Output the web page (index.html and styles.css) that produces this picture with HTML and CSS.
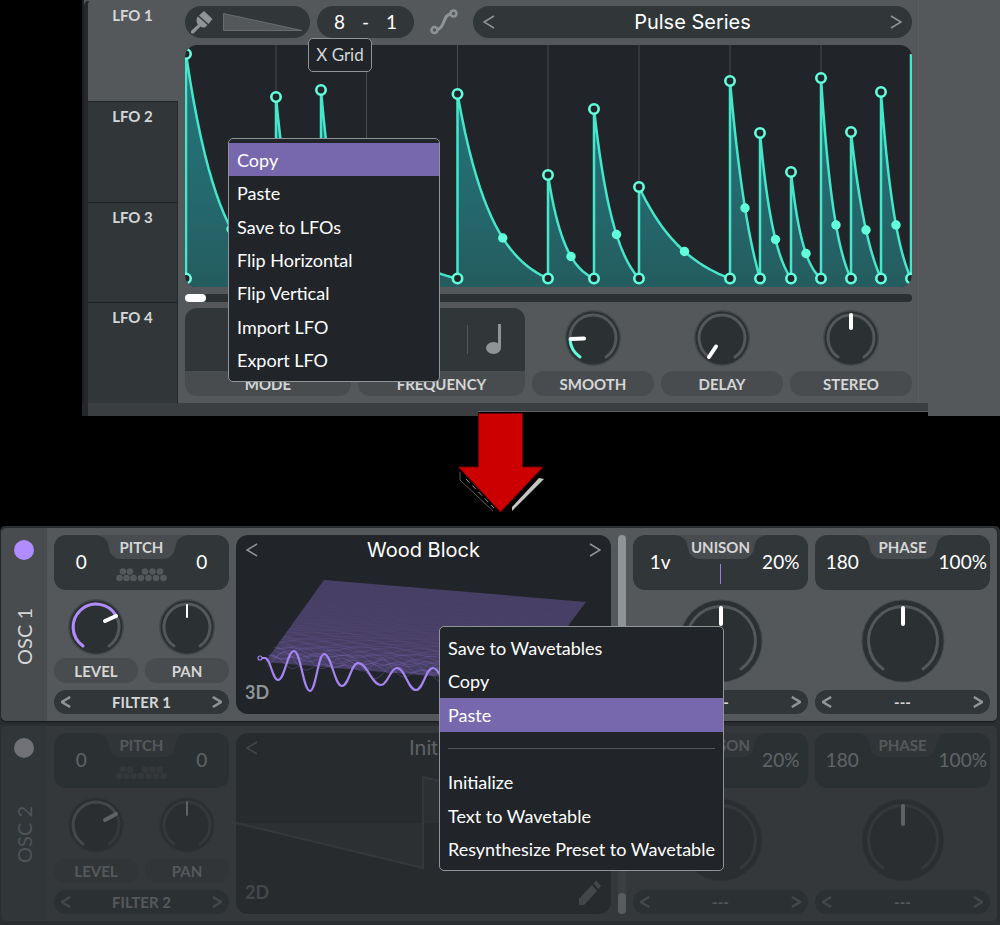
FILE: index.html
```html
<!DOCTYPE html>
<html lang="en">
<head>
<meta charset="utf-8">
<title>LFO to wavetable</title>
<link rel="stylesheet" href="styles.css">
</head>
<body>
<svg class="defs" aria-hidden="true">
  <defs>
    <symbol id="prev" viewBox="0 0 12 14"><path d="M11 1 1 7l10 6"/></symbol>
    <symbol id="next" viewBox="0 0 12 14"><path d="m1 1 10 6-10 6"/></symbol>
    <symbol id="dial" viewBox="-28 -28 56 56">
      <circle class="dial-rim" r="28"/><circle class="dial-face" r="26.500"/>
      <path class="dial-track" d="M-13 19A23 23 0 1 1 13 19"/>
    </symbol>
    <symbol id="dial-big" viewBox="-42 -42 84 84">
      <circle class="dial-rim" r="41.500"/><circle class="dial-face" r="40.500"/>
      <path class="dial-track" d="M-20 28A34.500 34.500 0 1 1 20 28"/>
    </symbol>
    <symbol id="keys" viewBox="0 0 52 14">
      <g fill="currentColor"><circle cx="7" cy="3.500" r="3.300"/><circle cx="14" cy="3.500" r="3.300"/><circle cx="29" cy="3.500" r="3.300"/><circle cx="36.500" cy="3.500" r="3.300"/><circle cx="44" cy="3.500" r="3.300"/>
      <circle cx="3.500" cy="10" r="3.300"/><circle cx="10.500" cy="10" r="3.300"/><circle cx="17.500" cy="10" r="3.300"/><circle cx="25" cy="10" r="3.300"/><circle cx="32.500" cy="10" r="3.300"/><circle cx="40" cy="10" r="3.300"/><circle cx="47.500" cy="10" r="3.300"/></g>
    </symbol>
  </defs>
</svg>

<section class="lfo">
  <nav class="tabs">
    <button class="tab tab--on">LFO 1</button>
    <button class="tab">LFO 2</button>
    <button class="tab">LFO 3</button>
    <button class="tab">LFO 4</button>
  </nav>
  <div class="lfo-main">
    <div class="toolbar">
      <button class="pill brush" aria-label="Paint pattern">
        <svg width="24" height="24" viewBox="0 0 24 24" fill="#8f9497"><path d="m14 1 8.500 8-4 5-9.500-8.500z"/><path d="m8 6.500 9.500 8.500-2 2c-1.500 1-3.500.5-5-.5L4 23c-2 1.500-4-.5-2.500-2.500L8 14.500c-1.500-2-2.500-5.500 0-8z"/></svg>
        <svg width="80" height="18" viewBox="0 0 80 18" fill="#54585b" stroke="#676b6e"><path d="M.5.5v17h78.500z"/></svg>
      </button>
      <div class="pill grid-size"><button>8</button><span>-</span><button>1</button></div>
      <button class="smooth-toggle" aria-label="Smooth mode"><svg width="28" height="26" viewBox="0 0 28 26" fill="none" stroke="#8f9497" stroke-width="2.500"><circle cx="4.500" cy="21" r="3"/><circle cx="23.500" cy="4.500" r="3"/><path stroke-width="3" d="M7.500 20.500C15 19 13 5.500 20.500 5"/></svg></button>
      <div class="pill selector">
        <button aria-label="Previous shape"><svg class="chev" width="12" height="14"><use href="#prev"/></svg></button>
        <span class="title">Pulse Series</span>
        <button aria-label="Next shape"><svg class="chev" width="12" height="14"><use href="#next"/></svg></button>
      </div>
    </div>
    <svg class="graph" viewBox="185 45 727 242" preserveAspectRatio="none" role="img" aria-label="LFO shape">
      <defs><linearGradient id="fade" gradientUnits="userSpaceOnUse" x1="0" y1="80" x2="0" y2="287"><stop offset="0" stop-color="#23747a"/><stop offset=".6" stop-color="#24686c"/><stop offset="1" stop-color="#245c5f"/></linearGradient></defs>
      <g id="graph"></g>
    </svg>
    <input class="phase-range" type="range" min="0" max="100" value="0" aria-label="Phase">
    <div class="controls">
      <div class="field field--left"><div class="field-value"></div><div class="caption">MODE</div></div>
      <div class="field field--right"><div class="field-value"><span class="divider"></span><svg width="16" height="31" viewBox="0 0 16 31" fill="#8f9497"><ellipse cx="7.500" cy="24" rx="7.500" ry="6"/><path d="M12 0h3v24h-3z"/></svg></div><div class="caption">FREQUENCY</div></div>
      <label class="knob"><svg class="dial" width="56" height="56" viewBox="-28 -28 56 56"><use href="#dial" x="-28" y="-28" width="56" height="56"/><path class="level level--teal" d="M-13 19A23 23 0 0 1-23 1"/><path class="hand" d="M-22 1-9 .5"/></svg><input type="range"><span class="caption">SMOOTH</span></label>
      <label class="knob"><svg class="dial" width="56" height="56" viewBox="-28 -28 56 56"><use href="#dial" x="-28" y="-28" width="56" height="56"/><path class="hand" d="M-13 19-6 8.500"/></svg><input type="range"><span class="caption">DELAY</span></label>
      <label class="knob"><svg class="dial" width="56" height="56" viewBox="-28 -28 56 56"><use href="#dial" x="-28" y="-28" width="56" height="56"/><path class="hand" d="M0-23V-10"/></svg><input type="range"><span class="caption">STEREO</span></label>
    </div>
  </div>
  <div class="lfo-foot"><div class="foot-left"></div><div class="foot-right"></div><div class="foot-end"></div></div>
  <div class="tooltip" role="tooltip">X Grid</div>
  <div class="menu menu--lfo" role="menu">
    <button class="on" role="menuitem">Copy</button>
    <button role="menuitem">Paste</button>
    <button role="menuitem">Save to LFOs</button>
    <button role="menuitem">Flip Horizontal</button>
    <button role="menuitem">Flip Vertical</button>
    <button role="menuitem">Import LFO</button>
    <button role="menuitem">Export LFO</button>
  </div>
</section>

<div class="arrow">
  <svg width="92" height="102" viewBox="454 412 92 102"><path d="M460 472v8l33 31" fill="none" stroke="#55595a"/><path d="m466 479 28 29" fill="none" stroke="#999" stroke-dasharray="5 4"/><path d="M512 507v4l32-32-5-1z" fill="#c3c5c3"/><path d="M478.500 413.500h44V467h20.500l-42.500 45-42-45h20z" fill="#c00" stroke="#700000"/></svg>
</div>

<main class="oscs">
  <section class="osc">
    <div class="side"><button class="power" aria-label="Oscillator 1 on"></button><h2>OSC 1</h2></div>
    <div class="body">
      <div class="col">
        <div class="box"><button>0</button><div class="notch"><span>PITCH</span><svg class="keys" width="52" height="14"><use href="#keys"/></svg></div><button>0</button></div>
        <div class="pair">
          <label class="knob"><svg class="dial" width="56" height="56" viewBox="-28 -28 56 56"><use href="#dial" x="-28" y="-28" width="56" height="56"/><path class="level" d="M-13 19A23 23 0 1 1 20-11.500"/><path class="hand" d="M20-11 9-6"/></svg><input type="range"><span class="caption">LEVEL</span></label>
          <label class="knob"><svg class="dial" width="56" height="56" viewBox="-28 -28 56 56"><use href="#dial" x="-28" y="-28" width="56" height="56"/><path class="hand hand--thin" d="M0-22V-10"/></svg><input type="range"><span class="caption">PAN</span></label>
        </div>
        <div class="pill route"><button aria-label="Previous output"><svg class="chev" width="10" height="12"><use href="#prev"/></svg></button><span>FILTER 1</span><button aria-label="Next output"><svg class="chev" width="10" height="12"><use href="#next"/></svg></button></div>
      </div>
      <div class="wave">
        <svg class="wave-art" viewBox="236 535 375 179" preserveAspectRatio="none" role="img" aria-label="Wavetable"><g id="mesh"></g></svg>
        <div class="wave-head"><button aria-label="Previous wavetable"><svg class="chev" width="12" height="14"><use href="#prev"/></svg></button><span class="title">Wood Block</span><button aria-label="Next wavetable"><svg class="chev" width="12" height="14"><use href="#next"/></svg></button></div>
        <div class="wave-foot"><button>3D</button></div>
      </div>
      <input class="frame-range" type="range" min="0" max="100" value="100" aria-label="Wave frame">
      <div class="col">
        <div class="box"><button>1v</button><div class="notch"><span>UNISON</span><i class="voice"></i></div><button>20%</button></div>
        <label class="knob knob--big"><svg class="dial" width="84" height="84" viewBox="-42 -42 84 84"><use href="#dial-big" x="-42" y="-42" width="84" height="84"/><path class="hand" d="M0-33V-17"/></svg><input type="range" aria-label="Unison warp"></label>
        <div class="pill route"><button aria-label="Previous warp"><svg class="chev" width="10" height="12"><use href="#prev"/></svg></button><span>---</span><button aria-label="Next warp"><svg class="chev" width="10" height="12"><use href="#next"/></svg></button></div>
      </div>
      <div class="col">
        <div class="box"><button>180</button><div class="notch"><span>PHASE</span></div><button>100%</button></div>
        <label class="knob knob--big"><svg class="dial" width="84" height="84" viewBox="-42 -42 84 84"><use href="#dial-big" x="-42" y="-42" width="84" height="84"/><path class="hand" d="M0-33V-17"/></svg><input type="range" aria-label="Phase warp"></label>
        <div class="pill route"><button aria-label="Previous morph"><svg class="chev" width="10" height="12"><use href="#prev"/></svg></button><span>---</span><button aria-label="Next morph"><svg class="chev" width="10" height="12"><use href="#next"/></svg></button></div>
      </div>
    </div>
  </section>

  <section class="osc osc--off">
    <div class="side"><button class="power" aria-label="Oscillator 2 off"></button><h2>OSC 2</h2></div>
    <div class="body">
      <div class="col">
        <div class="box"><button>0</button><div class="notch"><span>PITCH</span><svg class="keys" width="52" height="14"><use href="#keys"/></svg></div><button>0</button></div>
        <div class="pair">
          <label class="knob"><svg class="dial" width="56" height="56" viewBox="-28 -28 56 56"><use href="#dial" x="-28" y="-28" width="56" height="56"/><path class="level" d="M-13 19A23 23 0 1 1 20-11.500"/><path class="hand" d="M20-11 9-5"/></svg><input type="range"><span class="caption">LEVEL</span></label>
          <label class="knob"><svg class="dial" width="56" height="56" viewBox="-28 -28 56 56"><use href="#dial" x="-28" y="-28" width="56" height="56"/><path class="hand hand--thin" d="M0-23V-10"/></svg><input type="range"><span class="caption">PAN</span></label>
        </div>
        <div class="pill route"><button aria-label="Previous output"><svg class="chev" width="10" height="12"><use href="#prev"/></svg></button><span>FILTER 2</span><button aria-label="Next output"><svg class="chev" width="10" height="12"><use href="#next"/></svg></button></div>
      </div>
      <div class="wave">
        <svg class="wave-art" viewBox="236 733 375 181" preserveAspectRatio="none" role="img" aria-label="Saw wave"><path d="M236 823h375L423 777v91z" fill="#32373a"/><path d="m236 823 187 45v-91l188 46" fill="none" stroke="#54585b" stroke-width="2"/></svg>
        <div class="wave-head"><button aria-label="Previous wavetable"><svg class="chev" width="12" height="14"><use href="#prev"/></svg></button><span class="title">Init</span><button aria-label="Next wavetable"><svg class="chev" width="12" height="14"><use href="#next"/></svg></button></div>
        <div class="wave-foot"><button>2D</button><button aria-label="Edit wavetable"><svg width="24" height="26" viewBox="0 0 24 26" fill="#8f9497"><path d="M1 19 14 5l5 6L6 25H1z"/><path d="m15.500 3.500 2.500-3 5 5.500-2.500 3z"/></svg></button></div>
      </div>
      <input class="frame-range" type="range" min="0" max="100" value="100" aria-label="Wave frame">
      <div class="col">
        <div class="box"><button>1v</button><div class="notch"><span>UNISON</span></div><button>20%</button></div>
        <label class="knob knob--big"><svg class="dial" width="84" height="84" viewBox="-42 -42 84 84"><use href="#dial-big" x="-42" y="-42" width="84" height="84"/><path class="hand" d="M0-34V-16"/></svg><input type="range" aria-label="Unison warp"></label>
        <div class="pill route"><button aria-label="Previous warp"><svg class="chev" width="10" height="12"><use href="#prev"/></svg></button><span>---</span><button aria-label="Next warp"><svg class="chev" width="10" height="12"><use href="#next"/></svg></button></div>
      </div>
      <div class="col">
        <div class="box"><button>180</button><div class="notch"><span>PHASE</span></div><button>100%</button></div>
        <label class="knob knob--big"><svg class="dial" width="84" height="84" viewBox="-42 -42 84 84"><use href="#dial-big" x="-42" y="-42" width="84" height="84"/><path class="hand" d="M0-34V-16"/></svg><input type="range" aria-label="Phase warp"></label>
        <div class="pill route"><button aria-label="Previous morph"><svg class="chev" width="10" height="12"><use href="#prev"/></svg></button><span>---</span><button aria-label="Next morph"><svg class="chev" width="10" height="12"><use href="#next"/></svg></button></div>
      </div>
    </div>
  </section>

  <div class="menu menu--osc" role="menu">
    <button role="menuitem">Save to Wavetables</button>
    <button role="menuitem">Copy</button>
    <button class="on" role="menuitem">Paste</button>
    <hr>
    <button role="menuitem">Initialize</button>
    <button role="menuitem">Text to Wavetable</button>
    <button role="menuitem">Resynthesize Preset to Wavetable</button>
  </div>
</main>
<script src="app.js"></script>
</body>
</html>
```
FILE: styles.css
```css
* { box-sizing: border-box; }
body {
  margin: 0;
  background: #000;
  color: #d4d6d7;
  font: 15px/20px Lato, "Open Sans", sans-serif;
}
button {
  padding: 0;
  border: 0;
  background: none;
  color: inherit;
  font: inherit;
}
svg { display: block; flex: none; }
.defs { position: absolute; width: 0; height: 0; }

/* LFO section */
.lfo {
  position: relative;
  display: grid;
  grid-template-columns: 96px 1fr;
  margin-left: 82px;
  background: #54585b;
}
.tabs {
  display: grid;
  grid-auto-rows: 1fr;
  border-left: 2px solid #1c2023;
}
.tab {
  display: flex;
  justify-content: center;
  padding-top: 4px;
  border-left: 4px solid #24282b;
  border-right: 1px solid #24282b;
  border-top: 1px solid #202427;
  background: #313639;
  font-weight: 700;
}
.tab--on {
  border-top-left-radius: 6px;
  border-right-color: #54585b;
  border-top-color: #54585b;
  background: #54585b;
}
.lfo-main {
  display: flex;
  flex-direction: column;
  gap: 7px;
  margin-right: 81px;
  padding: 6px 6px 7px 7px;
  border-right: 1px solid #5b5f62;
}
.toolbar { display: flex; gap: 7px; height: 32px; }
.pill {
  display: flex;
  align-items: center;
  border-radius: 16px;
  background: #313639;
}
.brush { width: 125px; gap: 9px; padding-left: 5px; }
.grid-size {
  width: 97px;
  justify-content: space-between;
  padding: 0 17px;
  color: #fff;
  font-size: 19px;
}
.smooth-toggle { width: 45px; display: grid; place-items: center; }
.selector { flex: 1; justify-content: space-between; padding: 0 10px; }
.title {
  color: #fff;
  font: 20px/24px Inter, "Open Sans", sans-serif;
}
.chev { fill: none; stroke: #8f9497; stroke-width: 3; }
.selector .chev, .wave-head .chev { stroke-width: 1.500; }
.graph {
  width: 100%;
  height: 242px;
  border-radius: 12px;
  background: #212529;
}
.phase-range {
  width: 100%;
  height: 8px;
  margin: 0;
  border-radius: 4px;
  background: #2b3033;
  appearance: none;
}
.phase-range::-webkit-slider-thumb {
  width: 21px;
  height: 8px;
  border-radius: 4px;
  background: #fff;
  appearance: none;
}
.controls {
  display: grid;
  grid-template-columns: 166fr 167fr 122fr 122fr 122fr;
  gap: 7px;
  height: 88px;
  margin-top: -1px;
}
.field, .knob { display: flex; flex-direction: column; }
.field-value {
  flex: 1;
  display: flex;
  align-items: center;
  justify-content: flex-end;
  gap: 18px;
  padding-right: 23px;
  background: #313639;
}
.field--left .field-value { border-top-left-radius: 12px; }
.field--right .field-value { border-top-right-radius: 12px; }
.divider { width: 1px; height: 29px; background: #54585b; }
.caption {
  height: 25px;
  border-radius: 12px;
  background: #484c4f;
  text-align: center;
  line-height: 26px;
  font-weight: 700;
}
.field .caption { border-radius: 0 0 12px 12px; }
.knob { position: relative; justify-content: space-between; padding-top: 2px; }
.knob input { position: absolute; inset: 0; margin: 0; opacity: 0; }
.dial { align-self: center; }
.dial-rim { fill: #44484b; }
.dial-face { fill: #2b3033; }
.dial-track { fill: none; stroke: #54585b; stroke-width: 3; stroke-linecap: round; }
.level { fill: none; stroke: #b18cff; stroke-width: 3; stroke-linecap: round; }
.level--teal { stroke: #62ffdc; }
.hand { fill: none; stroke: #fff; stroke-width: 4; stroke-linecap: round; }
.hand--thin { stroke-width: 2; }
.lfo-foot {
  grid-column: 1 / -1;
  display: flex;
  align-items: flex-start;
  height: 13px;
  border-left: 6px solid #24282b;
  background: #000;
}
.foot-left { width: 390px; height: 13px; background: #3a3e41; }
.foot-right { flex: 1; height: 9px; border-bottom: 1px solid #5b5f62; background: #3a3e41; }
.foot-end { width: 72px; height: 13px; background: #54585b; }
.tooltip {
  position: absolute;
  top: 38px;
  left: 226px;
  width: 64px;
  padding: 6px 0;
  border: 1px solid #8f9497;
  border-radius: 5px;
  background: #212529;
  text-align: center;
  font-size: 17px;
}
.menu {
  position: absolute;
  display: grid;
  grid-auto-rows: 1fr;
  padding: 4px 0;
  border: 1px solid #8f9497;
  border-radius: 5px;
  background: #212529;
  color: #fff;
  font-size: 18px;
}
.menu button { padding: 0 8px; text-align: left; }
.menu .on { background: #7768ae; }
.menu hr {
  align-self: center;
  width: calc(100% - 16px);
  margin: 0 auto;
  border: 0;
  border-top: 1px solid #54585b;
}
.menu--lfo { top: 138px; left: 146px; width: 212px; height: 244px; }
.menu--osc { top: 100px; left: 439px; width: 285px; height: 245px; }

.arrow {
  position: relative;
  display: flex;
  justify-content: center;
  height: 114px;
  margin-top: -4px;
}

/* Oscillators */
.oscs {
  position: relative;
  display: grid;
  gap: 5px;
  padding: 2px 3px 4px 1px;
  border-radius: 5px 5px 0 0;
  background: #2a2e31;
}
.osc {
  display: grid;
  grid-template-columns: 46px 1fr;
  border-radius: 5px;
  box-shadow: 0 1px 2px #15181a;
}
.osc--off { box-shadow: none; }
.side {
  display: flex;
  flex-direction: column;
  align-items: center;
  border-radius: 5px 0 0 5px;
  background: #484c4f;
}
.power { width: 20px; height: 20px; margin-top: 12px; border-radius: 50%; background: #b18cff; }
.side h2 {
  margin: 48px 0 0;
  writing-mode: vertical-rl;
  transform: rotate(180deg);
  font-size: 20px;
  font-weight: 400;
}
.body {
  display: grid;
  grid-template-columns: 175fr 375fr 8px 175fr 175fr;
  gap: 7px;
  padding: 7px;
  border-radius: 0 5px 5px 0;
  background: #54585b;
}
.osc--off .body { opacity: 0.25; }
.osc--off .side { background: #313639; color: #505457; }
.osc--off .power { background: #717277; }
.osc--off .level { stroke: #8f9497; }
.col { display: flex; flex-direction: column; min-width: 0; }
.box {
  display: grid;
  grid-template-columns: 1fr 66px 1fr;
  height: 55px;
  border-radius: 12px;
  background: #313639;
  color: #fff;
  font-size: 19px;
}
.box button { padding-bottom: 2px; }
.notch {
  position: relative;
  display: flex;
  flex-direction: column;
  align-items: center;
  color: #d4d6d7;
  font-size: 15px;
}
.notch span {
  width: 66px;
  height: 24px;
  border-radius: 0 0 12px 12px;
  background: #484c4f;
  text-align: center;
  line-height: 24px;
  font-weight: 700;
}
.notch::before, .notch::after {
  content: "";
  position: absolute;
  top: 0;
  width: 12px;
  height: 12px;
}
.notch::before { left: -12px; background: radial-gradient(circle at 0 100%, transparent 11px, #484c4f 12px); }
.notch::after { right: -12px; background: radial-gradient(circle at 100% 100%, transparent 11px, #484c4f 12px); }
.keys { margin-top: 9px; color: #54585b; }
.voice { width: 1px; height: 20px; margin-top: 5px; background: #9a7de0; }
.pair {
  flex: 1;
  display: grid;
  grid-template-columns: 84fr 84fr;
  gap: 7px;
  min-height: 93px;
  padding-top: 7px;
}
.pair + .route { margin-top: 7px; }
.knob--big { flex: 1; justify-content: center; min-height: 100px; }
.route { height: 24px; justify-content: space-between; padding: 0 7px; font-weight: 700; }
.wave {
  display: grid;
  border-radius: 12px;
  background: #212529;
  overflow: hidden;
}
.wave > * { grid-area: 1 / 1; }
.wave-art { width: 100%; height: 100%; min-height: 179px; }
.osc--off .wave-art { min-height: 181px; }
.wave-head {
  display: flex;
  align-items: center;
  align-self: start;
  justify-content: space-between;
  padding: 3px 10px;
}
.wave-foot {
  display: flex;
  align-items: flex-end;
  align-self: end;
  justify-content: space-between;
  padding: 0 9px 8px;
  color: #8f9497;
  font-size: 18px;
  line-height: 28px;
}
.wave-foot button { font-weight: 700; }
.frame-range {
  width: 8px;
  height: 100%;
  margin: 0;
  border-radius: 4px;
  background: #8f9497;
  writing-mode: vertical-lr;
  appearance: none;
}
.frame-range::-webkit-slider-thumb {
  width: 8px;
  height: 21px;
  border-radius: 4px;
  background: #8f9497;
  appearance: none;
}
.osc--off .frame-range { background: #6d7174; }
.osc--off .frame-range::-webkit-slider-thumb { background: #e4e6e7; }
```
FILE: app.js
```js
const NS = "http://www.w3.org/2000/svg";
function add(parent, tag, attrs) {
  const el = document.createElementNS(NS, tag);
  for (const key in attrs) el.setAttribute(key, attrs[key]);
  parent.appendChild(el);
}

// LFO shape: each pulse is [x, peak y, end x, bend handle y]
const pulses = [
  [186, 54, 276, 229], [276, 97, 321, 236], [321, 90, 366.5, 238], [366.5, 180, 457.5, 258],
  [457.5, 94, 548, 238], [548, 175, 594, 256.5], [594, 109, 639, 234.5],
  [639, 187, 730, 251.5], [730, 81, 760, 208], [760, 133, 791, 239.5],
  [791, 172, 821, 253.5], [821, 78, 851, 225], [851, 132, 881, 230],
  [881, 92, 911, 225]
];
const floor = 278.5;
const graph = document.getElementById("graph");
for (const x of [276, 366.5, 457.5, 548, 639, 730, 821]) {
  add(graph, "path", { d: `M${x} 45V287`, stroke: "#494d50" });
}
let line = `M186 ${floor}`;
for (const [x, y, end, bend] of pulses) {
  const half = (bend - y) / (floor - y);
  const k = 2 * Math.log(half / (1 - half));
  line += `L${x} ${y}`;
  for (let i = 1; i <= 24; i++) {
    const t = i / 24;
    const f = (1 - Math.exp(-k * t)) / (1 - Math.exp(-k));
    line += `L${x + (end - x) * t} ${y + (floor - y) * f}`;
  }
}
line += "V54";
add(graph, "path", { d: line + "V287H186z", fill: "url(#fade)" });
add(graph, "path", { d: line, fill: "none", stroke: "#46e6cb", "stroke-width": 2.5, "stroke-linejoin": "round" });
const ring = { r: 4.7, fill: "#212529", stroke: "#62ffdc", "stroke-width": 2.6 };
for (const [x, y, end, bend] of pulses) {
  add(graph, "circle", { cx: (x + end) / 2, cy: bend, r: 4.7, fill: "#62ffdc" });
  add(graph, "circle", { cx: x, cy: y, ...ring });
  add(graph, "circle", { cx: x, cy: floor, ...ring });
}
add(graph, "circle", { cx: 911, cy: floor, ...ring });

// Wavetable: rows recede from the front wave to a flat back edge
const mesh = document.getElementById("mesh");
add(mesh, "path", { d: "M324 580 586 602 524 684 265 662z", fill: "#473f63" });
const rows = 48;
for (let r = rows; r >= 1; r--) {
  const z = r / rows;
  const ox = 266 + 58 * z;
  const oy = 662 - 82 * z;
  const amp = 9 * Math.exp(-z * 6);
  let d = "";
  for (let i = 0; i <= 130; i++) {
    const t = i / 130;
    const wave = Math.sin(t * 46 + r * 1.7) * 0.6 + Math.sin(t * 27 + r * 2.9) * 0.6;
    d += `${i ? "L" : "M"}${ox + 262 * t} ${oy + 22 * t + amp * wave}`;
  }
  add(mesh, "path", { d, fill: "none", stroke: "#9377d8", "stroke-opacity": 0.04 + 0.4 * Math.exp(-z * 3.5), "stroke-width": 0.8 });
}
const crest = [[260, 658], [265, 658], [278, 680], [294, 651], [310, 691], [324, 654], [342, 686], [358, 663], [381, 685], [397, 668], [416, 690], [433, 668], [450, 688]];
let front = `M${crest[0]}`;
for (let i = 1; i < crest.length; i++) {
  const [x0, y0] = crest[i - 1];
  const [x1, y1] = crest[i];
  const h = (x1 - x0) * 0.42;
  front += `C${x0 + h} ${y0} ${x1 - h} ${y1} ${x1} ${y1}`;
}
add(mesh, "path", { d: front, fill: "none", stroke: "#a585f0", "stroke-width": 2.2 });
add(mesh, "circle", { cx: 260, cy: 658, r: 2, fill: "#212529", stroke: "#a585f0", "stroke-width": 1.2 });
```
